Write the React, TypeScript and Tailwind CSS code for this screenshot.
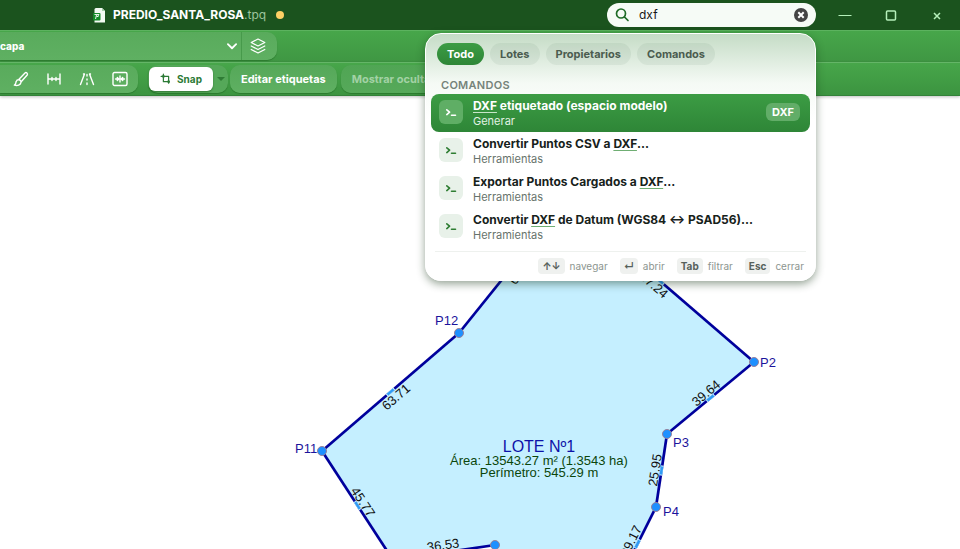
import { useState } from 'react';
import type { ReactNode } from 'react';

interface Command {
  title: string;
  group: string;
  badge?: string;
}

interface Edge {
  from: [number, number];
  to: [number, number];
  length: string;
  label: [number, number];
  angle: number;
}

interface Vertex {
  name: string;
  at: [number, number];
  label: [number, number];
}

const filters = ['Todo', 'Lotes', 'Propietarios', 'Comandos'];

const commands: Command[] = [
  { title: 'DXF etiquetado (espacio modelo)', group: 'Generar', badge: 'DXF' },
  { title: 'Convertir Puntos CSV a DXF...', group: 'Herramientas' },
  { title: 'Exportar Puntos Cargados a DXF...', group: 'Herramientas' },
  { title: 'Convertir DXF de Datum (WGS84 ↔ PSAD56)...', group: 'Herramientas' },
];

const edges: Edge[] = [
  { from: [459, 237], to: [566, 104], length: '60.17', label: [522, 174], angle: -51 },
  { from: [566, 104], to: [754, 266], length: '87.24', label: [654, 189], angle: 41 },
  { from: [754, 266], to: [667, 338], length: '39.64', label: [706, 297], angle: -40 },
  { from: [667, 338], to: [656, 411], length: '25.95', label: [655, 374], angle: -81 },
  { from: [656, 411], to: [619, 485], length: '29.17', label: [631, 445], angle: -64 },
  { from: [495, 449], to: [393, 464], length: '36.53', label: [443, 449], angle: -8 },
  { from: [393, 464], to: [322, 355], length: '45.77', label: [363, 406], angle: 57 },
  { from: [322, 355], to: [459, 237], length: '63.71', label: [396, 301], angle: -41 },
];

const vertices: Vertex[] = [
  { name: 'P12', at: [459, 237], label: [435, 229] },
  { name: 'P2', at: [754, 266], label: [760, 271] },
  { name: 'P3', at: [667, 338], label: [673, 351] },
  { name: 'P4', at: [656, 411], label: [663, 420] },
  { name: '', at: [495, 449], label: [0, 0] },
  { name: 'P11', at: [322, 355], label: [295, 357] },
];

function Icon({ children, className }: { children: ReactNode; className: string }) {
  return (
    <svg
      viewBox="0 0 16 16"
      className={className}
      fill="none"
      stroke="currentColor"
      strokeWidth="1.4"
      strokeLinecap="round"
      strokeLinejoin="round"
      aria-hidden="true"
    >
      {children}
    </svg>
  );
}

function TitleBar() {
  const [query, setQuery] = useState('dxf');

  return (
    <header className="relative z-10 flex h-[30px] items-center bg-[#1b531e] pl-[93px] text-white">
      <svg viewBox="0 0 13 15" className="h-[15px] w-[13px]" aria-hidden="true">
        <path d="M3 0h6l3 3v11.500H1.500V1.500Q1.500 0 3 0Z" fill="#f2faf2" />
        <path d="M9 0v3h3" fill="#a9cfab" />
        <rect y="5" width="7.500" height="7.500" rx="1" fill="#128a26" />
        <path d="M1.500 6.500h4.500L4.500 8.500M3.500 7l-1 4M5.500 8.500H3.500" stroke="#fff" strokeWidth=".9" fill="none" />
      </svg>
      <h1 className="ml-[7px] text-[12px] font-bold">
        PREDIO_SANTA_ROSA<span className="font-normal text-[#9cc49d]">.tpq</span>
      </h1>
      <span className="ml-[10px] size-2 rounded-full bg-[#fdd065]" />

      <div className="relative ml-auto flex h-6 w-[209px] items-center rounded-full bg-[#f6fbf6] px-2">
        <Icon className="size-4 text-[#1f6b26]">
          <circle cx="6" cy="6.500" r="4.500" strokeWidth="1.700" />
          <path d="M9.500 10l3.500 3.500" strokeWidth="1.700" />
        </Icon>
        <input
          type="text"
          aria-label="Buscar"
          value={query}
          onChange={(e) => setQuery(e.target.value)}
          className="ml-2 w-0 flex-1 bg-transparent text-[12px] text-[#161616] outline-none"
        />
        <button type="button" aria-label="Borrar" onClick={() => setQuery('')}>
          <svg viewBox="0 0 14 14" className="size-[14px]" aria-hidden="true">
            <circle cx="7" cy="7" r="7" fill="#444" />
            <path d="M4.300 4.300l5.400 5.400M9.700 4.300l-5.400 5.400" stroke="#fff" strokeWidth="2" />
          </svg>
        </button>
        <SearchPopover />
      </div>

      <div className="ml-[6px] flex h-full text-[#b5f0ba]">
        <button type="button" aria-label="Minimizar" className="grid w-[46px] place-items-center">
          <svg viewBox="0 0 14 14" className="size-[14px]" aria-hidden="true">
            <path d="M.5 7.500h13" stroke="currentColor" />
          </svg>
        </button>
        <button type="button" aria-label="Maximizar" className="grid w-[46px] place-items-center">
          <svg viewBox="0 0 14 14" className="size-[14px]" fill="none" aria-hidden="true">
            <rect x="2.500" y="3" width="9" height="9" rx="1" stroke="currentColor" strokeWidth="1.500" />
          </svg>
        </button>
        <button type="button" aria-label="Cerrar" className="grid w-[46px] place-items-center">
          <svg viewBox="0 0 14 14" className="size-[14px]" aria-hidden="true">
            <path d="M4 5l6 6M10 5l-6 6" stroke="currentColor" strokeWidth="1.500" />
          </svg>
        </button>
      </div>
    </header>
  );
}

function Highlighted({ text, active }: { text: string; active: boolean }) {
  const [before, after] = text.split('DXF');
  return (
    <>
      {before}
      <span className={`underline decoration-1 underline-offset-2 ${active ? 'decoration-[#c8e6c9]' : 'decoration-[#6fae73]'}`}>
        DXF
      </span>
      {after}
    </>
  );
}

function CommandRow({ command, active, onSelect }: { command: Command; active: boolean; onSelect: () => void }) {
  return (
    <button
      type="button"
      onClick={onSelect}
      className={`flex h-[38px] w-full items-center rounded-lg px-2 pb-[2px] text-left ${
        active ? 'bg-linear-to-b from-[#3c9c44] to-[#2e8637] text-white' : 'text-[#17221b]'
      }`}
    >
      <span
        className={`grid size-6 shrink-0 place-items-center rounded-md ${
          active ? 'bg-[#5fae65] text-white' : 'bg-[#e8f1e9] text-[#2e7d32]'
        }`}
      >
        <Icon className="size-4">
          <path d="M3.800 5.800l2.800 2.400-2.800 2.400M8.500 11.200h4" strokeWidth="1.600" />
        </Icon>
      </span>
      <span className="ml-[10px] flex-1 pt-[2px]">
        <span className="block text-[12px] leading-4 font-bold">
          <Highlighted text={command.title} active={active} />
        </span>
        <span className={`block text-[11px] leading-[14px] ${active ? 'text-[#e2f2e3]' : 'text-[#67736b]'}`}>
          {command.group}
        </span>
      </span>
      {command.badge && (
        <span className="mr-[2px] rounded-md bg-[#62ad68] px-[6px] text-[11px] leading-[18px] font-bold">
          {command.badge}
        </span>
      )}
    </button>
  );
}

function KeyHint({ keys, children }: { keys: ReactNode; children: ReactNode }) {
  return (
    <span className="flex items-center gap-[5px]">
      <kbd className="grid h-4 place-items-center rounded bg-[#eff1ef] px-1 font-[Inter,sans-serif] font-bold text-[#56605a]">
        {keys}
      </kbd>
      {children}
    </span>
  );
}

function SearchPopover() {
  const [filter, setFilter] = useState('Todo');
  const [selected, setSelected] = useState(0);

  return (
    <section className="absolute top-[30px] right-0 w-[391px] rounded-2xl border border-white bg-linear-to-b from-[#c5dcc6] via-[#f5faf5] via-20% to-white to-35% px-[5px] pt-[9px] shadow-[0_3px_8px_rgba(20,50,20,0.45)]">
      <div className="flex gap-[6px] px-[6px]">
        {filters.map((name) => (
          <button
            key={name}
            type="button"
            onClick={() => setFilter(name)}
            className={`h-[22px] rounded-full px-[10px] text-[11px] font-bold ${
              name === filter ? 'bg-linear-to-b from-[#3c9c44] to-[#2e8637] text-white' : 'bg-[#2f4f33]/7 text-[#4b5c4f]'
            }`}
          >
            {name}
          </button>
        ))}
      </div>
      <h2 className="mt-3 mb-px px-[10px] text-[11px] leading-4 font-semibold tracking-wide text-[#75837a]">COMANDOS</h2>
      <div>
        {commands.map((command, i) => (
          <CommandRow key={command.title} command={command} active={i === selected} onSelect={() => setSelected(i)} />
        ))}
      </div>
      <footer className="mx-1 mt-[5px] flex h-[29px] items-center justify-end gap-3 border-t border-[#eef1ee] pr-[2px] text-[10px] text-[#8c958f]">
        <KeyHint keys="↑↓">navegar</KeyHint>
        <KeyHint keys="↵">abrir</KeyHint>
        <KeyHint keys="Tab">filtrar</KeyHint>
        <KeyHint keys="Esc">cerrar</KeyHint>
      </footer>
    </section>
  );
}

function LayerBar() {
  return (
    <div className="flex h-8 items-start border-t border-[#5cb35f] bg-linear-to-b from-[#47a64a] to-[#3f9743] pt-px text-white">
      <div className="flex h-7 w-[277px] rounded-r-[10px] bg-linear-to-b from-[#59ab5c] to-[#5fb062] shadow-[0_1px_1px_rgba(0,60,0,0.3)]">
        <div className="relative flex-1">
          <select
            aria-label="Capa"
            defaultValue="capa"
            className="h-full w-full appearance-none bg-transparent text-[10px] font-extrabold outline-none"
          >
            <option>capa</option>
          </select>
          <Icon className="pointer-events-none absolute top-2 right-[3px] size-3">
            <path d="M2.500 5.500l5.500 5.500 5.500-5.500" strokeWidth="2.400" />
          </Icon>
        </div>
        <button type="button" aria-label="Capas" className="grid w-9 place-items-center border-l border-[#479a4b] pr-[3px]">
          <Icon className="size-4">
            <path d="M8 1l6.800 3.500L8 8 1.200 4.500zM1.200 8L8 11.500 14.800 8M1.200 11.500L8 15l6.800-3.500" strokeWidth="1.200" />
          </Icon>
        </button>
      </div>
    </div>
  );
}

function ToolBar() {
  return (
    <div className="relative flex h-[34px] items-center border-t border-[#64b567] border-b border-b-[#338239] bg-linear-to-b from-[#47a64a] to-[#3c9440] text-[11px] font-bold text-white shadow-[0_1px_3px_rgba(0,0,0,0.25)]">
      <div className="flex h-7 w-[138px] items-center justify-end gap-[17px] rounded-r-[10px] bg-linear-to-b from-[#59ab5c] to-[#5fb062] pr-[10px] shadow-[0_1px_1px_rgba(0,60,0,0.3)]">
        <button type="button" aria-label="Copiar formato">
          <Icon className="size-4">
            <path d="M6 8.300l6-6.300c1.200-1.100 3.200.6 2.200 2L8.400 10.500zM5.800 8.800c1.500.2 2.400 1.300 2.200 2.600-.4 2.400-3.500 3.700-6.700 2.700 1.700-.6 1.300-2 1.900-3.500.4-1.200 1.400-1.900 2.600-1.800z" />
          </Icon>
        </button>
        <button type="button" aria-label="Acotar">
          <Icon className="size-4">
            <path d="M2 3v10M14 3v10M2 8h12M6 6.500v3M10 6.500v3" />
          </Icon>
        </button>
        <button type="button" aria-label="Vías">
          <Icon className="size-4">
            <path d="M4.500 3h1L1.500 13.500M11.500 3h-1l4 10.500M8 3.500v1.500M8 8v1M8 12v1.500" />
          </Icon>
        </button>
        <button type="button" aria-label="Ajustar ancho">
          <Icon className="size-4">
            <rect x="1" y="1.500" width="14" height="13" rx="1.500" />
            <path d="M8 5v6M3.500 8h3M12.500 8h-3M5.300 6.500L6.800 8 5.300 9.500zM10.700 6.500L9.200 8l1.500 1.500z" />
          </Icon>
        </button>
      </div>

      <div className="ml-[10px] flex h-7 w-[80px] items-center rounded-[10px] bg-[#55a859] shadow-[0_1px_1px_rgba(0,60,0,0.3)]">
        <button
          type="button"
          className="ml-px flex h-6 w-16 items-center justify-center gap-[5px] rounded-md bg-white text-[10px] text-[#2b7a35] shadow-[0_1px_2px_rgba(0,50,0,0.4)]"
        >
          <Icon className="size-[12px]">
            <path d="M4.500 1.500v10h8M1.500 4.500h10v9" strokeWidth="1.600" />
            <path d="M3 3h3v3H3zM10 10h3v3h-3z" fill="currentColor" stroke="none" />
          </Icon>
          Snap
        </button>
        <button type="button" aria-label="Opciones de snap" className="grid flex-1 place-items-center text-[#2f7c35]">
          <svg viewBox="0 0 8 4" className="h-1 w-2" aria-hidden="true">
            <path d="M0 0h8L4 4z" fill="currentColor" />
          </svg>
        </button>
      </div>

      <button
        type="button"
        className="ml-[2px] h-7 rounded-[10px] bg-linear-to-b from-[#55a859] to-[#5fb062] px-[11px] shadow-[0_1px_1px_rgba(0,60,0,0.3)]"
      >
        Editar etiquetas
      </button>
      <button
        type="button"
        className="ml-1 h-7 rounded-[10px] bg-linear-to-b from-[#50a554] to-[#56a95a] px-[11px] text-[#a3d2a5] shadow-[0_1px_1px_rgba(0,60,0,0.3)]"
      >
        Mostrar ocultas
      </button>
    </div>
  );
}

// Short highlighted dash in the middle of an edge, with a small gap at each end.
function MidDash({ edge }: { edge: Edge }) {
  const [x1, y1] = edge.from;
  const [x2, y2] = edge.to;
  const size = Math.hypot(x2 - x1, y2 - y1);
  const cx = (x1 + x2) / 2;
  const cy = (y1 + y2) / 2;
  const ux = (x2 - x1) / size;
  const uy = (y2 - y1) / size;
  return (
    <>
      <line x1={cx - ux * 5} y1={cy - uy * 5} x2={cx + ux * 5} y2={cy + uy * 5} stroke="#c5efff" strokeWidth="3" />
      <line x1={cx - ux * 4} y1={cy - uy * 4} x2={cx + ux * 4} y2={cy + uy * 4} stroke="#2f9bf5" strokeWidth="2.500" />
    </>
  );
}

function PlotCanvas() {
  return (
    <svg
      viewBox="0 0 960 453"
      preserveAspectRatio="xMidYMin slice"
      className="size-full font-['Liberation_Sans',Arial,sans-serif]"
      role="img"
      aria-label="Plano del lote"
    >
      <path
        d="M459 237L566 104 754 266 667 338 656 411 619 485 520 520 495 449 393 464 322 355Z"
        fill="#c5efff"
      />
      {edges.map((edge) => (
        <g key={edge.length}>
          <line
            x1={edge.from[0]}
            y1={edge.from[1]}
            x2={edge.to[0]}
            y2={edge.to[1]}
            stroke="#00009c"
            strokeWidth="2.700"
          />
          <MidDash edge={edge} />
          <text
            transform={`translate(${edge.label[0]} ${edge.label[1]}) rotate(${edge.angle})`}
            textAnchor="middle"
            dominantBaseline="central"
            fontSize="13"
            fill="#101010"
          >
            {edge.length}
          </text>
        </g>
      ))}
      {vertices.map((v) => (
        <g key={v.at.join()}>
          <circle cx={v.at[0]} cy={v.at[1]} r="4.500" fill="#1e90ff" stroke="#98809a" />
          {v.name && (
            <text x={v.label[0]} y={v.label[1]} fontSize="13" fill="#1c149c">
              {v.name}
            </text>
          )}
        </g>
      ))}
      <g textAnchor="middle">
        <text x="539" y="356" fontSize="16" fill="#0d12a8">
          LOTE Nº1
        </text>
        <text x="539" y="369" fontSize="13" fill="#0b460b">
          Área: 13543.27 m² (1.3543 ha)
        </text>
        <text x="539" y="381" fontSize="13" fill="#0b460b">
          Perímetro: 545.29 m
        </text>
      </g>
    </svg>
  );
}

export default function App() {
  return (
    <div className="flex h-screen flex-col overflow-hidden bg-white font-[Inter,sans-serif]">
      <TitleBar />
      <LayerBar />
      <ToolBar />
      <main className="min-h-0 flex-1">
        <PlotCanvas />
      </main>
    </div>
  );
}
